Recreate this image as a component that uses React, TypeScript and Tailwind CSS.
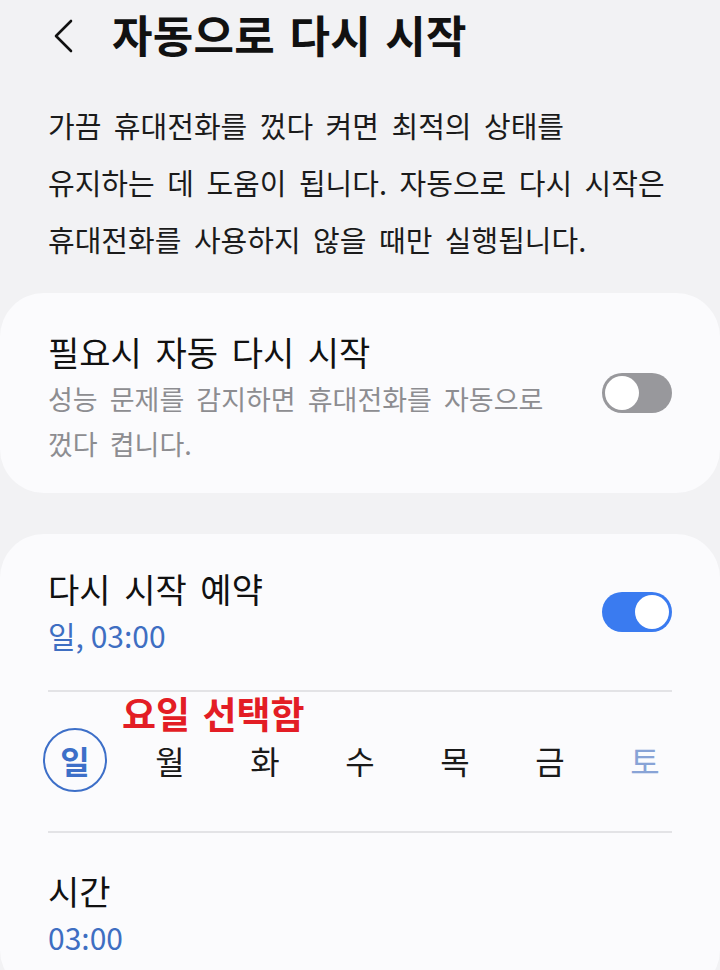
import React from "react";

const font = { fontFamily: '"Noto Sans CJK KR", "Noto Sans", sans-serif' };

function Toggle({ on }: { on: boolean }) {
  return on ? (
    <div className="flex h-[40px] w-[70px] items-center justify-end rounded-full bg-[#3a7bf0] pr-[3px]">
      <div className="h-[34px] w-[34px] rounded-full bg-white" />
    </div>
  ) : (
    <div className="flex h-[40px] w-[70px] items-center rounded-full bg-[#98989c] pl-[3px]">
      <div className="h-[34px] w-[34px] rounded-full bg-white" />
    </div>
  );
}

export default function App() {
  const days = ["일", "월", "화", "수", "목", "금", "토"];
  return (
    <div className="min-h-[970px] w-[720px] overflow-hidden bg-[#f2f2f4] text-[#111]" style={font}>
      {/* header */}
      <div className="flex h-[72px] items-center pl-[52px]">
        <svg width="22" height="34" viewBox="0 0 22 34" className="mr-[38px]">
          <path d="M19 2 L4 17 L19 32" fill="none" stroke="#111" strokeWidth="2.6" strokeLinecap="round" strokeLinejoin="round" />
        </svg>
        <div className="-mt-[4px] text-[44px] font-bold leading-none tracking-[0.3px] [word-spacing:4px]">자동으로 다시 시작</div>
      </div>

      {/* description */}
      <div className="mt-[25px] px-[48px] text-[29px] leading-[57px] text-[#1b1b1b] [word-spacing:6px]">
        <div>가끔 휴대전화를 껐다 켜면 최적의 상태를</div>
        <div>유지하는 데 도움이 됩니다. 자동으로 다시 시작은</div>
        <div>휴대전화를 사용하지 않을 때만 실행됩니다.</div>
      </div>

      {/* card 1 */}
      <div className="mt-[25px] flex h-[200px] items-center justify-between rounded-[44px] bg-[#fbfbfd] pl-[48px] pr-[48px]">
        <div className="mt-[10px]">
          <div className="text-[34px] leading-[44px] text-[#111] [word-spacing:6px]">필요시 자동 다시 시작</div>
          <div className="mt-[2px] text-[27px] leading-[45px] text-[#8d8d91] [word-spacing:6px]">
            <div>성능 문제를 감지하면 휴대전화를 자동으로</div>
            <div>껐다 켭니다.</div>
          </div>
        </div>
        <Toggle on={false} />
      </div>

      {/* card 2 */}
      <div className="relative mt-[41px] h-[460px] rounded-[44px] bg-[#fbfbfd] px-[48px]">
        <div className="flex h-[156px] items-center justify-between">
          <div className="mt-[-2px]">
            <div className="text-[34px] leading-[44px] text-[#111] [word-spacing:6px]">다시 시작 예약</div>
            <div className="mt-[4px] text-[30px] leading-[40px] text-[#3e6ec2]">일, 03:00</div>
          </div>
          <Toggle on={true} />
        </div>
        <div className="h-[2px] bg-[#e3e3e6]" />
        <div className="absolute left-[122px] top-[156px] text-[37px] font-bold leading-[46px] text-[#e31d25] [word-spacing:4px]">
          요일 선택함
        </div>
        <div className="flex h-[139px] items-center justify-between pb-[4px]">
          {days.map((d, i) =>
            i === 0 ? (
              <div key={d} className="-ml-[5px] flex h-[64px] w-[64px] items-center justify-center rounded-full border-2 border-[#3d6fc8] text-[32px] font-bold leading-none text-[#3d6fc8]">
                {d}
              </div>
            ) : (
              <div
                key={d}
                className={`flex h-[64px] w-[64px] items-center justify-center text-[32px] font-normal leading-none ${i === 6 ? "-mr-[5px] text-[#88a3d6]" : "text-[#1a1a1a]"}`}
              >
                {d}
              </div>
            )
          )}
        </div>
        <div className="h-[2px] bg-[#e3e3e6]" />
        <div className="pt-[36px]">
          <div className="text-[34px] leading-[44px] text-[#111]">시간</div>
          <div className="mt-[4px] text-[30px] leading-[40px] text-[#3e6ec2]">03:00</div>
        </div>
      </div>
    </div>
  );
}
